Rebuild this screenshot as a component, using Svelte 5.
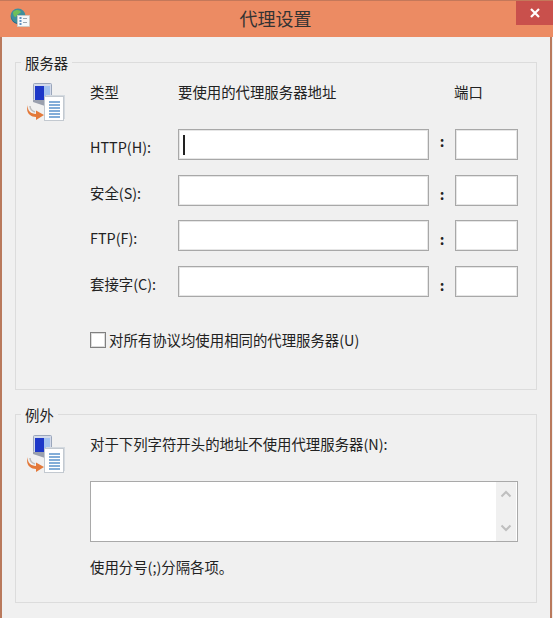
<script>
  const rows = [
    { label: 'HTTP(H):', focus: true },
    { label: '安全(S):' },
    { label: 'FTP(F):' },
    { label: '套接字(C):' }
  ];
</script>

{#snippet serverIcon()}
  <svg class="icon" width="38" height="38" viewBox="0 0 38 38">
    <rect x="6.5" y="0.5" width="18" height="17" rx="1" fill="#d3daea" stroke="#9aa6bb" />
    <rect x="8" y="3" width="9" height="14" fill="#1c37c8" />
    <rect x="17" y="3" width="6" height="11" fill="#a3c2ee" />
    <path d="M6 17 L18 17 L18 23 L6 19 Z" fill="#9aa0ae" />
    <rect x="19" y="12" width="19" height="24" fill="#d4dae0" />
    <rect x="17.5" y="13.5" width="19" height="24" fill="#fff" stroke="#c3c9d0" />
    <path d="M22 19h11M22 22h11M22 25h11M22 28h11M22 31h11M22 34h11" stroke="#5b93cc" stroke-width="1.7" />
    <path d="M1 22 C0 27 3 31 9 31 L9 27.5 L17 32 L9 37 L9 34 C3 34 -2 29 1 22 Z" fill="#e3793a" />
    <path d="M3 23 C3 26 5 28 8 29" fill="none" stroke="#bdbdbd" stroke-width="1.5" />
  </svg>
{/snippet}

<div class="window">
  <header class="titlebar">
    <svg class="appicon" width="20" height="20" viewBox="0 0 20 20">
      <circle cx="8" cy="8" r="7.5" fill="#3f8f9c" />
      <path d="M3 4 C6 1 10 2 11 4 C9 6 7 6 6 9 C4 9 3 7 3 4 Z" fill="#6fbf5a" />
      <path d="M1 8 C2 13 5 15 9 15.5 L8 16 C4 16 1 12 1 8 Z" fill="#1d5c8a" />
      <rect x="7.5" y="7.5" width="12" height="11" fill="#f6f8f8" stroke="#c8ccc8" stroke-width="0.8" />
      <path d="M9.5 10h2M9.5 13h2M9.5 16h2" stroke="#2f6fb0" stroke-width="1.4" />
      <path d="M13 10.5h4M13 14.5h4" stroke="#9aa5ad" stroke-width="1" />
    </svg>
    <h1>代理设置</h1>
    <button class="close" aria-label="关闭">
      <svg width="10" height="10" viewBox="0 0 10 10">
        <path d="M1 1 L9 9 M9 1 L1 9" stroke="#fff" stroke-width="2.2" />
      </svg>
    </button>
  </header>

  <main class="content">
    <section class="group servers">
      <span class="legend">服务器</span>
      <div class="icon-col">{@render serverIcon()}</div>
      <div class="body">
        <div class="grid">
          <span class="head">类型</span>
          <span class="head">要使用的代理服务器地址</span>
          <span></span>
          <span class="head port">端口</span>
          {#each rows as row}
            <span class="label">{row.label}</span>
            <div class="field">
              {#if row.focus}<i class="caret"></i>{/if}
            </div>
            <span class="colon" class:first={row.focus}>:</span>
            <div class="field"></div>
          {/each}
        </div>
        <label class="same">
          <span class="checkbox"></span>
          对所有协议均使用相同的代理服务器(U)
        </label>
      </div>
    </section>

    <section class="group except">
      <span class="legend">例外</span>
      <div class="icon-col">{@render serverIcon()}</div>
      <div class="body">
        <p class="intro">对于下列字符开头的地址不使用代理服务器(N):</p>
        <div class="textarea">
          <div class="scroll">
            <svg width="12" height="8" viewBox="0 0 12 8"><path d="M1.5 6.5 L6 2 L10.5 6.5" fill="none" stroke="#bfbfbf" stroke-width="2" /></svg>
            <svg width="12" height="8" viewBox="0 0 12 8"><path d="M1.5 1.5 L6 6 L10.5 1.5" fill="none" stroke="#bfbfbf" stroke-width="2" /></svg>
          </div>
        </div>
        <p class="hint">使用分号(;)分隔各项。</p>
      </div>
    </section>
  </main>
</div>

<style>
  :global(body) {
    margin: 0;
    background: #f0f0f0;
  }

  .window {
    width: 552px;
    height: 618px;
    box-sizing: border-box;
    background: #f0f0f0;
    border-left: 2px solid #b9795c;
    border-right: 2px solid #b9795c;
    font-family: "Noto Sans CJK SC", "Liberation Sans", sans-serif;
    font-size: 14.4px;
    color: #222;
  }

  .titlebar {
    position: relative;
    height: 37px;
    margin: 0 -3px 0 -2px;
    padding: 0 2px 2px 0;
    background: #ec8b63;
    border-top: 1px solid #c4785a;
    box-sizing: border-box;
    display: flex;
    align-items: center;
    justify-content: center;
  }

  .titlebar h1 {
    margin: 0;
    font-size: 18px;
    font-weight: 400;
    color: #333;
  }

  .appicon {
    position: absolute;
    left: 10px;
    top: 7px;
  }

  .close {
    position: absolute;
    right: 0;
    top: 0;
    width: 37px;
    height: 24px;
    padding: 0;
    border: 0;
    background: #c9504c;
    display: flex;
    align-items: center;
    justify-content: center;
  }

  .content {
    padding: 25px 13px 0;
    display: flex;
    flex-direction: column;
    gap: 24px;
  }

  .group {
    position: relative;
    display: flex;
    border: 1px solid #dcdcdc;
    box-sizing: border-box;
  }

  .servers {
    height: 328px;
  }

  .except {
    height: 189px;
  }

  .legend {
    position: absolute;
    left: 5px;
    top: -10px;
    padding: 0 4px;
    background: #f0f0f0;
    line-height: 20px;
  }

  .icon-col {
    width: 74px;
    flex: none;
    padding: 20px 0 0 11px;
    box-sizing: border-box;
  }

  .icon {
    display: block;
  }

  .body {
    flex: 1;
    min-width: 0;
  }

  .grid {
    display: grid;
    grid-template-columns: 88px 251px 26px 63px;
    grid-template-rows: 33px repeat(4, 31px);
    row-gap: 14.67px;
    align-items: center;
    margin-top: 18.5px;
  }

  .head {
    align-self: start;
    line-height: 20px;
  }

  .head.port {
    margin-left: -1px;
  }

  .label {
    margin-top: 5px;
    line-height: 20px;
  }

  .field {
    height: 31px;
    box-sizing: border-box;
    background: #fff;
    border: 1px solid #a8a8a8;
    box-shadow: inset 0 0 0 1px #e6e6e6;
    display: flex;
    align-items: center;
    padding-left: 4px;
  }

  .caret {
    width: 2px;
    height: 20px;
    background: #222;
  }

  .colon {
    margin-top: 7px;
    text-align: center;
    font-weight: 700;
    line-height: 20px;
  }

  .colon.first {
    margin-top: 0;
    margin-bottom: 8px;
  }

  .same {
    display: flex;
    align-items: center;
    gap: 3px;
    margin-top: 33px;
    line-height: 20px;
  }

  .checkbox {
    width: 16px;
    height: 16px;
    box-sizing: border-box;
    background: #fff;
    border: 1px solid #808080;
    box-shadow: inset 0 0 0 1px #dcdcdc;
  }

  .intro {
    margin: 19px 0 0;
    line-height: 20px;
  }

  .textarea {
    width: 428px;
    height: 61px;
    margin-top: 27px;
    box-sizing: border-box;
    background: #fff;
    border: 1px solid #a9a9a9;
    display: flex;
    justify-content: flex-end;
  }

  .scroll {
    width: 20px;
    margin-right: 1px;
    background: #f0f0f0;
    display: flex;
    flex-direction: column;
    justify-content: space-between;
    align-items: center;
    padding: 8px 0 9px;
    box-sizing: border-box;
  }

  .scroll svg {
    display: block;
  }

  .hint {
    margin: 15px 0 0;
    line-height: 20px;
  }
</style>
